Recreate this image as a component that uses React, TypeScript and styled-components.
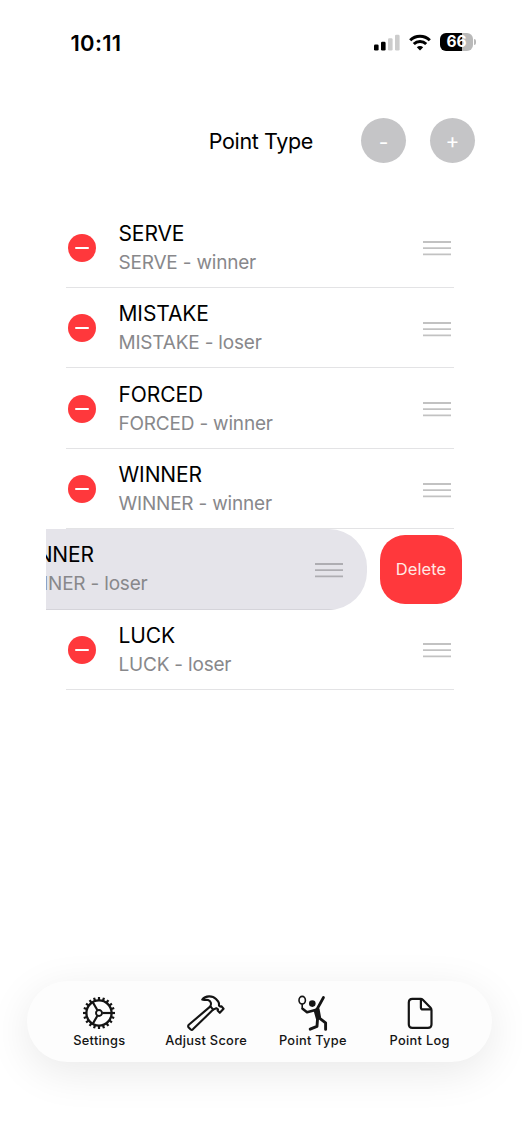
import React from "react";
import styled, { createGlobalStyle } from "styled-components";

const GlobalStyle = createGlobalStyle`
  *, *::before, *::after { box-sizing: border-box; }
  body { margin: 0; background: #fff; font-family: Inter, "Liberation Sans", sans-serif; }
  button { font: inherit; border: 0; padding: 0; cursor: pointer; }
  svg { display: block; flex: none; }
`;

const Screen = styled.main`
  display: flex;
  flex-direction: column;
  width: 522px;
  height: 1134px;
  overflow: hidden;
  background: #fff;
  color: #000;
`;

const StatusBar = styled.div`
  display: flex;
  align-items: center;
  justify-content: space-between;
  height: 84px;
  padding: 0 46px 0 70.5px;
`;

const Time = styled.span`
  padding-top: 1px;
  font-size: 22px;
  font-weight: 600;
  line-height: 26px;
  letter-spacing: 0.3px;
`;

const StatusIcons = styled.div`
  display: flex;
  align-items: center;
  gap: 9px;
`;

const Battery = styled.div`
  display: flex;
  align-items: center;
  gap: 1px;
`;

const BatteryBody = styled.div<{ $level: number }>`
  width: 33px;
  height: 18px;
  border-radius: 6px;
  background: linear-gradient(to right, #000 ${(p) => p.$level}%, #b9b9b9 ${(p) => p.$level}%);
  color: #fff;
  font-size: 15.5px;
  font-weight: 700;
  line-height: 18px;
  text-align: center;
`;

const BatteryTip = styled.div`
  width: 2px;
  height: 6px;
  border-radius: 0 2px 2px 0;
  background: #b9b9b9;
`;

const Header = styled.header`
  display: flex;
  align-items: center;
  justify-content: flex-end;
  height: 45px;
  margin: 34px 47px 44.8px 0;
`;

const Title = styled.h1`
  margin: 0 48px 0 0;
  font-size: 21.5px;
  font-weight: 400;
  line-height: 26px;
  letter-spacing: -0.36px;
`;

const RoundButton = styled.button<{ $lift?: number }>`
  display: flex;
  align-items: center;
  justify-content: center;
  width: 45px;
  height: 45px;
  padding-top: 3px;
  padding-bottom: ${(p) => p.$lift ?? 0}px;
  border-radius: 50%;
  background: #c5c5c7;
  color: #fff;
  font-size: 21px;
  & + & { margin-left: 24px; }
`;

const List = styled.ul`
  display: flex;
  flex-direction: column;
  margin: 0 60px 0 46px;
  padding: 0;
  list-style: none;
`;

const RowItem = styled.li`
  display: flex;
  height: 80.35px;
  padding: 0 8px 0 20px;
`;

const RowBody = styled.div`
  display: flex;
  align-items: center;
  flex: 1;
  padding: 2px 3px 0 2px;
  border-bottom: 1.4px solid #e3e3e5;
`;

const RemoveBadge = styled.button`
  display: flex;
  align-items: center;
  justify-content: center;
  width: 28px;
  height: 28px;
  margin: -1px 22.5px 0 0;
  border-radius: 50%;
  background: #ff383c;
  &::before {
    content: "";
    width: 14px;
    height: 2px;
    border-radius: 1px;
    background: #fff;
  }
`;

const Texts = styled.div`
  flex: 1;
  white-space: nowrap;
`;

const Name = styled.div`
  font-size: 21px;
  line-height: 28px;
  letter-spacing: -0.1px;
`;

const Detail = styled.div`
  color: #88888b;
  font-size: 19px;
  line-height: 29px;
  letter-spacing: -0.2px;
`;

const SwipedItem = styled.li`
  display: flex;
  align-items: center;
  width: 416px;
  height: 80.35px;
`;

const SwipedPanel = styled.div`
  display: flex;
  justify-content: flex-end;
  width: 321px;
  height: 100%;
  padding-right: 21px;
  margin-right: 13px;
  overflow: hidden;
  border-radius: 0 38px 38px 0 / 0 38px 38px 0;
  background: #e5e4ea;
`;

const SwipedBody = styled(RowBody)`
  flex: none;
  width: 388px;
  border-color: #d5d4da;
`;

const DeleteButton = styled.button`
  width: 82px;
  height: 69px;
  border-radius: 25px;
  background: #ff383c;
  color: #ffe9e4;
  font-size: 16.5px;
  letter-spacing: 0.1px;
`;

const TabBar = styled.nav`
  display: flex;
  width: 465px;
  height: 81px;
  margin: auto 0 72px 27px;
  padding: 14px 19px 0;
  border-radius: 40.5px;
  background: #fdfdfd;
  box-shadow: 0 10px 44px rgba(0, 0, 0, 0.09);
`;

const Tab = styled.button`
  display: flex;
  flex: 1;
  flex-direction: column;
  align-items: center;
  background: transparent;
  color: #141414;
`;

const TabLabel = styled.span`
  margin-top: -2px;
  font-size: 12.8px;
  font-weight: 500;
  line-height: 16px;
  letter-spacing: 0.3px;
  white-space: nowrap;
`;

const SignalIcon = () => (
  <svg width="26" height="17" viewBox="0 0 26 17">
    <rect x="0" y="10.5" width="4.6" height="6" rx="1.3" />
    <rect x="7" y="7.7" width="4.6" height="8.8" rx="1.3" />
    <rect x="14" y="4.2" width="4.6" height="12.3" rx="1.3" fill="#ccc" />
    <rect x="21" y="0.7" width="4.6" height="15.8" rx="1.3" fill="#ccc" />
  </svg>
);

const WifiIcon = () => (
  <svg width="22" height="17" viewBox="0 0 22 17" fill="none" stroke="#000" strokeWidth="3">
    <path d="M1.2 6.2a14 14 0 0 1 19.6 0" />
    <path d="M4.8 10a8.9 8.9 0 0 1 12.4 0" />
    <path d="M11 16.4 7.8 13.2a4.6 4.6 0 0 1 6.4 0Z" fill="#000" stroke="none" />
  </svg>
);

const DragHandle = () => (
  <svg width="28.5" height="16" viewBox="0 0 28.5 16" stroke="#000" strokeOpacity="0.24" strokeWidth="1.8">
    <path d="M0 2h28.5M0 8.2h28.5M0 14.4h28.5" />
  </svg>
);

const teeth = Array.from({ length: 20 }, (_, i) => i * 18);

const GearIcon = () => (
  <svg width="50" height="40" viewBox="0 0 50 40" fill="none" stroke="currentColor" strokeWidth="2.2">
    <g transform="translate(25 18)">
      <circle r="12.6" strokeWidth="2.3" />
      <circle r="3" strokeWidth="1.9" />
      {teeth.map((a) => (
        <path key={a} d="M13 0h3" transform={`rotate(${a})`} />
      ))}
      {[0, 120, 240].map((a) => (
        <path key={a} d="M3.4 0h9" transform={`rotate(${a})`} />
      ))}
    </g>
  </svg>
);

const HammerIcon = () => (
  <svg width="50" height="40" viewBox="-1 5 50 40" fill="none" stroke="currentColor" strokeWidth="2.1" strokeLinejoin="round" strokeLinecap="round">
    <path d="M28.4 16.4 6.8 34.8Q5.6 36.1 6.7 37.5L8.5 39.3Q9.9 40.5 11.1 39.1L31.2 19.6" />
    <path d="M20.2 9.6C23.5 5.4 30.4 5.3 34 9L36.2 11.5Q37.2 12.8 37 15.6L38.4 16.6 39.4 16.3 41.6 18.7 37.8 22.8 35.6 20.6 36 19.4 34.3 18.2 31.2 19.6 28.4 16.4C29.8 13.6 28.9 11.2 26 10.1 24 9.4 22 10.4 20.2 9.6Z" />
  </svg>
);

const TennisIcon = () => (
  <svg width="50" height="40" viewBox="-2 5 50 40" fill="none" stroke="currentColor" strokeLinejoin="round" strokeLinecap="round">
    <ellipse cx="12.2" cy="10.2" rx="3.2" ry="3.8" strokeWidth="1.6" />
    <path d="M12.2 14.4v4" strokeWidth="1.6" />
    <circle cx="22.3" cy="13.6" r="3.3" fill="currentColor" stroke="none" />
    <path d="M12.6 18.8 17 22.3 25.5 20" strokeWidth="2.5" />
    <path d="M26.8 19.6 33.4 7.6" strokeWidth="2.9" />
    <path d="M25.2 20.4 28 19.4 29.4 27 27.4 28.4Z" fill="currentColor" strokeWidth="3.2" />
    <path d="M27.6 28 27 36.4 20.2 39.2" strokeWidth="2.9" />
    <path d="M28.8 27.6 35.6 32.8V39.4" strokeWidth="2.9" />
  </svg>
);

const DocumentIcon = () => (
  <svg width="50" height="40" viewBox="0 0 50 40" fill="none" stroke="currentColor" strokeWidth="2.2" strokeLinejoin="round">
    <path d="M17.4 3.8H25.6Q26.8 3.8 27.8 4.8L35.6 12.8Q36.5 13.8 36.5 15.2V29.2Q36.5 32.8 32.9 32.8H17.4Q13.8 32.8 13.8 29.2V7.4Q13.8 3.8 17.4 3.8Z" />
    <path d="M25.9 4V12.4Q25.9 14.4 27.9 14.4H36.3" />
  </svg>
);

const pointTypes = [
  { name: "SERVE", result: "winner" },
  { name: "MISTAKE", result: "loser" },
  { name: "FORCED", result: "winner" },
  { name: "WINNER", result: "winner" },
  { name: "WINNER", result: "loser", swiped: true },
  { name: "LUCK", result: "loser" },
];

const tabs = [
  { label: "Settings", Icon: GearIcon },
  { label: "Adjust Score", Icon: HammerIcon },
  { label: "Point Type", Icon: TennisIcon },
  { label: "Point Log", Icon: DocumentIcon },
];

const RowContent = ({ name, result }: { name: string; result: string }) => (
  <>
    <RemoveBadge aria-label={`Remove ${name}`} />
    <Texts>
      <Name>{name}</Name>
      <Detail>{`${name} - ${result}`}</Detail>
    </Texts>
    <DragHandle />
  </>
);

export default function App() {
  return (
    <>
      <GlobalStyle />
      <Screen>
        <StatusBar>
          <Time>10:11</Time>
          <StatusIcons>
            <SignalIcon />
            <WifiIcon />
            <Battery>
              <BatteryBody $level={66}>66</BatteryBody>
              <BatteryTip />
            </Battery>
          </StatusIcons>
        </StatusBar>
        <Header>
          <Title>Point Type</Title>
          <RoundButton>-</RoundButton>
          <RoundButton $lift={3}>+</RoundButton>
        </Header>
        <List>
          {pointTypes.map((p) =>
            p.swiped ? (
              <SwipedItem key={p.name + p.result}>
                <SwipedPanel>
                  <SwipedBody>
                    <RowContent name={p.name} result={p.result} />
                  </SwipedBody>
                </SwipedPanel>
                <DeleteButton>Delete</DeleteButton>
              </SwipedItem>
            ) : (
              <RowItem key={p.name + p.result}>
                <RowBody>
                  <RowContent name={p.name} result={p.result} />
                </RowBody>
              </RowItem>
            )
          )}
        </List>
        <TabBar>
          {tabs.map(({ label, Icon }) => (
            <Tab key={label}>
              <Icon />
              <TabLabel>{label}</TabLabel>
            </Tab>
          ))}
        </TabBar>
      </Screen>
    </>
  );
}
